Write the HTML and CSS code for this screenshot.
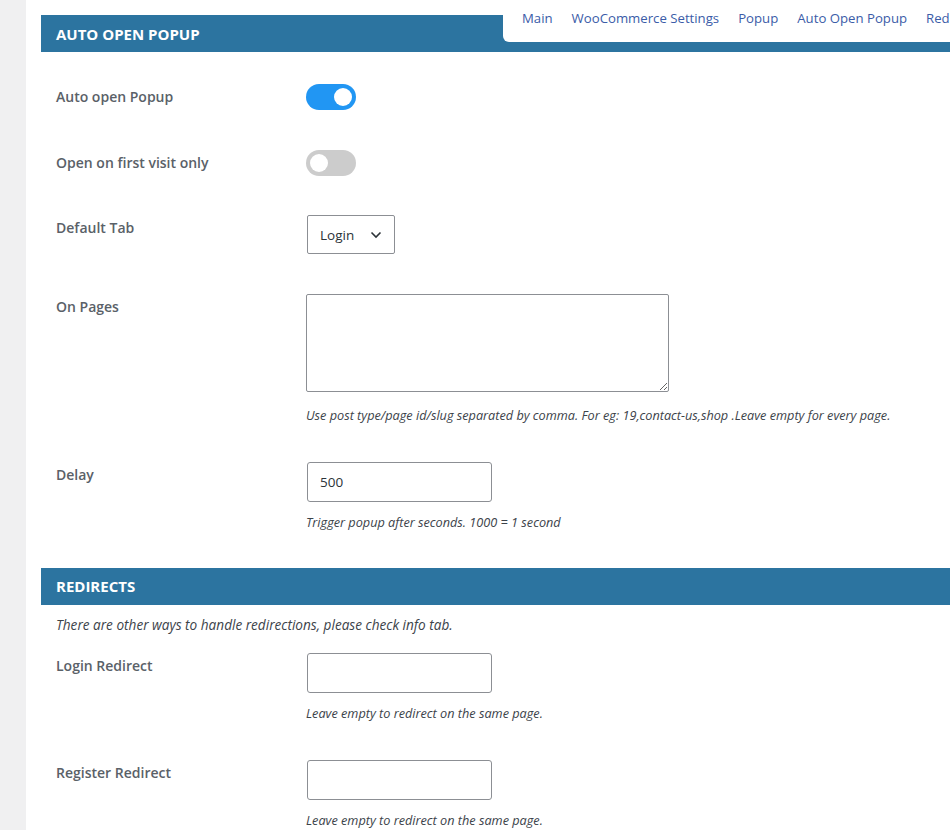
FILE: index.html
```html
<!DOCTYPE html>
<html lang="en">
<head>
    <meta charset="UTF-8">
    <meta name="viewport" content="width=device-width, initial-scale=1.0">
    <title>Auto Open Popup Settings</title>
    <link rel="stylesheet" href="styles.css">
</head>
<body>

<div class="panel">
    <div class="section-head">
        <h2>AUTO OPEN POPUP</h2>
        <ul class="tabs">
            <li><a href="#">Main</a></li>
            <li><a href="#">WooCommerce Settings</a></li>
            <li><a href="#">Popup</a></li>
            <li><a href="#">Auto Open Popup</a></li>
            <li><a href="#">Red</a></li>
        </ul>
    </div>

    <div class="rows first">
        <div class="row">
            <label class="label">Auto open Popup</label>
            <div class="field">
                <span class="toggle on"><span class="knob"></span></span>
            </div>
        </div>
        <div class="row">
            <label class="label">Open on first visit only</label>
            <div class="field">
                <span class="toggle"><span class="knob"></span></span>
            </div>
        </div>
        <div class="row">
            <label class="label">Default Tab</label>
            <div class="field">
                <div class="select-wrap">
                    <select>
                        <option>Login</option>
                        <option>Register</option>
                    </select>
                    <svg width="12" height="8" viewBox="0 0 12 8"><path d="M1.5 1.5 L6 6 L10.5 1.5" fill="none" stroke="#2c3338" stroke-width="1.6"/></svg>
                </div>
            </div>
        </div>
        <div class="row">
            <label class="label">On Pages</label>
            <div class="field">
                <textarea class="pages"></textarea>
                <p class="help">Use post type/page id/slug separated by comma. For eg: 19,contact-us,shop .Leave empty for every page.</p>
            </div>
        </div>
        <div class="row">
            <label class="label">Delay</label>
            <div class="field">
                <input type="text" class="text" value="500">
                <p class="help">Trigger popup after seconds. 1000 = 1 second</p>
            </div>
        </div>
    </div>

    <div class="section-head">
        <h2>REDIRECTS</h2>
    </div>
    <p class="desc">There are other ways to handle redirections, please check info tab.</p>

    <div class="rows redirects">
        <div class="row">
            <label class="label">Login Redirect</label>
            <div class="field">
                <input type="text" class="text">
                <p class="help">Leave empty to redirect on the same page.</p>
            </div>
        </div>
        <div class="row">
            <label class="label">Register Redirect</label>
            <div class="field">
                <input type="text" class="text">
                <p class="help">Leave empty to redirect on the same page.</p>
            </div>
        </div>
    </div>
</div>

</body>
</html>
```

FILE: styles.css
```css
html, body {
    overflow: hidden;
}
body {
    font-family: "Open Sans", "Noto Sans", sans-serif;
    background-color: #f0f0f1;
    margin: 0;
    color: #50575e;
}
.panel {
    margin-left: 26px;
    background: #fff;
    min-height: 830px;
    padding: 15px 0 0 15px;
}
.section-head {
    position: relative;
    background: #2c74a0;
    height: 37px;
    display: flex;
    align-items: center;
    padding-left: 15px;
}
.section-head h2 {
    margin: 0;
    color: #fff;
    font-size: 15px;
    font-weight: 700;
}
.tabs {
    position: absolute;
    left: 462px;
    top: -15px;
    height: 42px;
    margin: 0;
    padding: 0 0 0 19px;
    list-style: none;
    display: flex;
    gap: 19px;
    background: #fff;
    border-bottom-left-radius: 6px;
    white-space: nowrap;
}
.tabs li {
    padding-top: 9px;
    font-size: 13.2px;
}
.tabs a {
    color: #3b5ca8;
    text-decoration: none;
}
.rows {
    padding-top: 12px;
}
.rows.first {
    margin-bottom: 18px;
}
.row {
    display: flex;
    padding: 20px 0 19.5px;
}
.redirects .row {
    padding: 19.5px 0 19px;
}
.label {
    width: 250px;
    flex-shrink: 0;
    padding: 3px 0 0 15px;
    font-size: 14px;
    font-weight: 600;
    line-height: 20px;
    color: #5a6168;
}
.field {
    flex: 1;
}
.toggle {
    display: flex;
    align-items: center;
    width: 50px;
    height: 26px;
    border-radius: 13px;
    background: #ccc;
    padding: 0 4px;
    box-sizing: border-box;
}
.toggle.on {
    background: #2196f3;
    justify-content: flex-end;
}
.knob {
    width: 18px;
    height: 18px;
    border-radius: 50%;
    background: #fff;
}
.select-wrap {
    display: flex;
    align-items: center;
    width: 88px;
    height: 39px;
    box-sizing: border-box;
    border: 1px solid #8c8f94;
    border-radius: 2px;
    margin-left: 1px;
}
.select-wrap select {
    appearance: none;
    -webkit-appearance: none;
    border: none;
    background: transparent;
    font-family: inherit;
    font-size: 13.5px;
    color: #2c3338;
    padding: 0 0 0 12px;
    width: 62px;
    outline: none;
}
.pages {
    display: block;
    width: 363px;
    height: 98px;
    box-sizing: border-box;
    border: 1px solid #8c8f94;
    border-radius: 2px;
    margin: 0;
}
.pages + .help {
    margin-top: 15px;
}
.text {
    display: block;
    width: 185px;
    height: 40px;
    box-sizing: border-box;
    border: 1px solid #8c8f94;
    border-radius: 3px;
    margin: 0 0 0 1px;
    padding: 0 12px;
    font-family: inherit;
    font-size: 13.5px;
    color: #2c3338;
}
.help {
    margin: 12px 0 0;
    font-size: 12.7px;
    font-style: italic;
    line-height: 16px;
    color: #3c434a;
}
.desc {
    margin: 0;
    padding: 11px 0 0 15px;
    font-size: 13.6px;
    font-style: italic;
    line-height: 18px;
    color: #3c434a;
}
.desc + .rows {
    padding-top: 0;
}
```
